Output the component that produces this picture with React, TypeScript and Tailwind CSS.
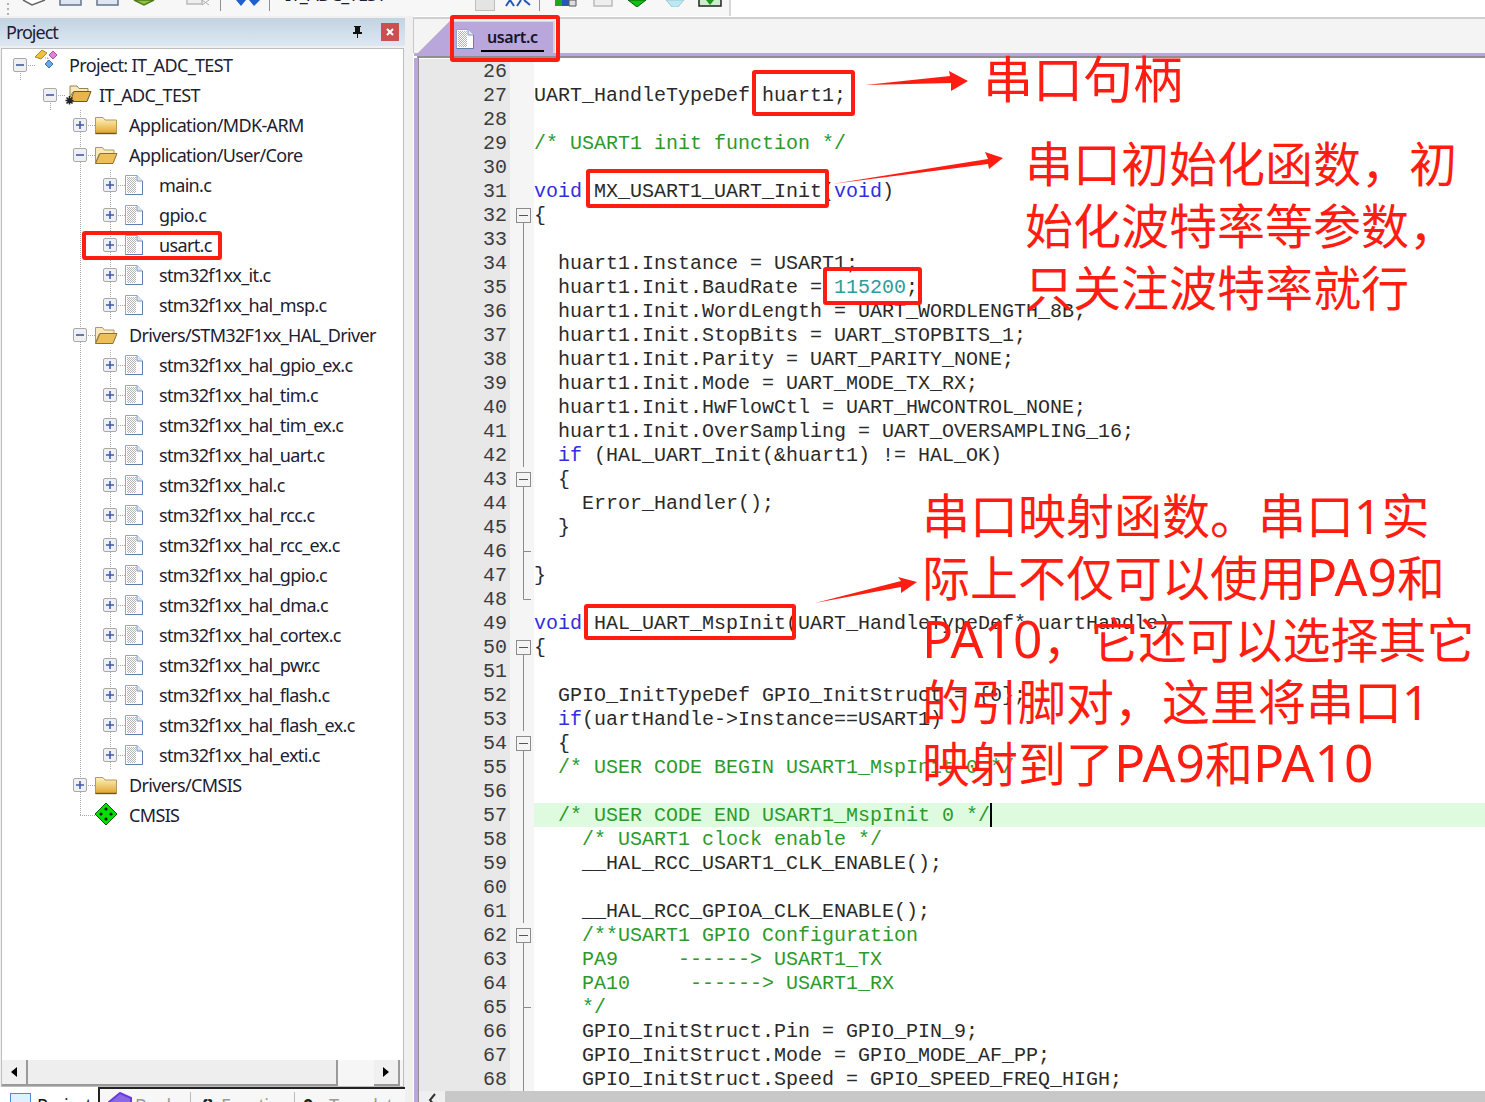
import type { ReactNode } from "react"

const RED = "#ff1d12"
const C = "#2a2a2a"
const K = "#2f2fe0"
const G = "#2c9a2c"
const N = "#2a9d9d"

type Tok = string | [string, string]
type Fold = "box" | "line" | "tick" | "end" | null

// line number, fold marker, tokens
const codeLines: [number, Fold, Tok[]][] = [
  [26, null, []],
  [27, null, ["UART_HandleTypeDef huart1;"]],
  [28, null, []],
  [29, null, [["/* USART1 init function */", G]]],
  [30, null, []],
  [31, null, [["void", K], " MX_USART1_UART_Init(", ["void", K], ")"]],
  [32, "box", ["{"]],
  [33, "line", []],
  [34, "line", ["  huart1.Instance = USART1;"]],
  [35, "line", ["  huart1.Init.BaudRate = ", ["115200", N], ";"]],
  [36, "line", ["  huart1.Init.WordLength = UART_WORDLENGTH_8B;"]],
  [37, "line", ["  huart1.Init.StopBits = UART_STOPBITS_1;"]],
  [38, "line", ["  huart1.Init.Parity = UART_PARITY_NONE;"]],
  [39, "line", ["  huart1.Init.Mode = UART_MODE_TX_RX;"]],
  [40, "line", ["  huart1.Init.HwFlowCtl = UART_HWCONTROL_NONE;"]],
  [41, "line", ["  huart1.Init.OverSampling = UART_OVERSAMPLING_16;"]],
  [42, "line", ["  ", ["if", K], " (HAL_UART_Init(&huart1) != HAL_OK)"]],
  [43, "box", ["  {"]],
  [44, "line", ["    Error_Handler();"]],
  [45, "line", ["  }"]],
  [46, "tick", []],
  [47, "line", ["}"]],
  [48, "end", []],
  [49, null, [["void", K], " HAL_UART_MspInit(UART_HandleTypeDef* uartHandle)"]],
  [50, "box", ["{"]],
  [51, "line", []],
  [52, "line", ["  GPIO_InitTypeDef GPIO_InitStruct = {0};"]],
  [53, "line", ["  ", ["if", K], "(uartHandle->Instance==USART1)"]],
  [54, "box", ["  {"]],
  [55, "line", [["  /* USER CODE BEGIN USART1_MspInit 0 */", G]]],
  [56, "line", []],
  [57, "line", [["  /* USER CODE END USART1_MspInit 0 */", G]]],
  [58, "line", [["    /* USART1 clock enable */", G]]],
  [59, "line", ["    __HAL_RCC_USART1_CLK_ENABLE();"]],
  [60, "line", []],
  [61, "line", ["    __HAL_RCC_GPIOA_CLK_ENABLE();"]],
  [62, "box", [["    /**USART1 GPIO Configuration", G]]],
  [63, "line", [["    PA9     ------> USART1_TX", G]]],
  [64, "line", [["    PA10     ------> USART1_RX", G]]],
  [65, "tick", [["    */", G]]],
  [66, "line", ["    GPIO_InitStruct.Pin = GPIO_PIN_9;"]],
  [67, "line", ["    GPIO_InitStruct.Mode = GPIO_MODE_AF_PP;"]],
  [68, "line", ["    GPIO_InitStruct.Speed = GPIO_SPEED_FREQ_HIGH;"]],
]

type Row = { level: number; text: string; icon: "project" | "target" | "closed" | "open" | "file" | "cmsis"; box?: "plus" | "minus"; guides: number[]; last?: boolean }

const files = (names: string[]): Row[] =>
  names.map((text) => ({ level: 3, text, icon: "file", box: "plus", guides: [2] }))

const treeRows: Row[] = [
  { level: 0, text: "Project: IT_ADC_TEST", icon: "project", box: "minus", guides: [] },
  { level: 1, text: "IT_ADC_TEST", icon: "target", box: "minus", guides: [] },
  { level: 2, text: "Application/MDK-ARM", icon: "closed", box: "plus", guides: [] },
  { level: 2, text: "Application/User/Core", icon: "open", box: "minus", guides: [] },
  ...files(["main.c", "gpio.c", "usart.c", "stm32f1xx_it.c", "stm32f1xx_hal_msp.c"]),
  { level: 2, text: "Drivers/STM32F1xx_HAL_Driver", icon: "open", box: "minus", guides: [] },
  ...files([
    "stm32f1xx_hal_gpio_ex.c",
    "stm32f1xx_hal_tim.c",
    "stm32f1xx_hal_tim_ex.c",
    "stm32f1xx_hal_uart.c",
    "stm32f1xx_hal.c",
    "stm32f1xx_hal_rcc.c",
    "stm32f1xx_hal_rcc_ex.c",
    "stm32f1xx_hal_gpio.c",
    "stm32f1xx_hal_dma.c",
    "stm32f1xx_hal_cortex.c",
    "stm32f1xx_hal_pwr.c",
    "stm32f1xx_hal_flash.c",
    "stm32f1xx_hal_flash_ex.c",
    "stm32f1xx_hal_exti.c",
  ]),
  { level: 2, text: "Drivers/CMSIS", icon: "closed", box: "plus", guides: [] },
  { level: 2, text: "CMSIS", icon: "cmsis", guides: [], last: true },
]

function Connector({ box, last, first }: { box?: "plus" | "minus"; last?: boolean; first?: boolean }) {
  return (
    <svg width="30" height="30" className="shrink-0">
      <path d={first ? "M15.5 15V30" : last ? "M15.5 0V15" : "M15.5 0V30"} stroke="#a8a8a8" strokeDasharray="1 1" fill="none" />
      <path d="M15 15.5H30" stroke="#a8a8a8" strokeDasharray="1 1" fill="none" />
      {box && (
        <>
          <rect x="8.5" y="8.5" width="13" height="13" rx="1.5" fill="#eef0f4" stroke="#a9a9a9" />
          <path d={box === "plus" ? "M11 15H19M15 11V19" : "M11 15H19"} stroke="#3f5aa8" strokeWidth="1.6" fill="none" />
        </>
      )}
    </svg>
  )
}

function Guide({ on }: { on: boolean }) {
  return (
    <svg width="30" height="30" className="shrink-0">
      {on && <path d="M15.5 0V30" stroke="#a8a8a8" strokeDasharray="1 1" fill="none" />}
    </svg>
  )
}

function FileIcon() {
  return (
    <svg width="20" height="22" viewBox="0 0 20 22">
      <defs>
        <pattern id="dith" width="2" height="2" patternUnits="userSpaceOnUse">
          <rect width="1" height="1" fill="#b4b4b4" />
          <rect x="1" y="1" width="1" height="1" fill="#b4b4b4" />
        </pattern>
      </defs>
      <path d="M1.5 1.5H13L18.5 7V20.5H1.5Z" fill="#fff" stroke="#8ea6c8" />
      <rect x="3" y="3" width="9" height="16" fill="url(#dith)" />
      <path d="M13 1.5V7H18.5" fill="#dfe8f4" stroke="#7f98bf" />
      <path d="M18.5 7V20.5H1.5" fill="none" stroke="#5f7fae" />
    </svg>
  )
}

function TreeIcon({ icon }: { icon: Row["icon"] }) {
  if (icon === "file") return <div className="ml-[-2px]"><FileIcon /></div>
  if (icon === "closed")
    return (
      <svg width="24" height="20" viewBox="0 0 24 20" className="ml-[-2px]">
        <defs>
          <linearGradient id="fld" x1="0" y1="0" x2="0" y2="1">
            <stop offset="0" stopColor="#fff3bf" />
            <stop offset="1" stopColor="#e0a52c" />
          </linearGradient>
        </defs>
        <path d="M1.5 18.5V2.5H9L11 5H22.5V18.5Z" fill="url(#fld)" stroke="#b39a5a" />
        <path d="M1.5 18.5H22.5" stroke="#6b5a24" strokeWidth="1.4" />
      </svg>
    )
  if (icon === "open")
    return (
      <svg width="24" height="20" viewBox="0 0 24 20" className="ml-[-2px]">
        <path d="M1.5 18V2.5H8.5L10.5 5H20V9H5Z" fill="#f7e9bd" stroke="#b39a5a" />
        <path d="M1.5 18.5L6 8.5H23L19 18.5Z" fill="#eebe58" stroke="#8a7232" />
      </svg>
    )
  if (icon === "target")
    return (
      <svg width="28" height="24" viewBox="0 0 28 24" className="ml-[-2px]">
        <path d="M6 14V3H13L15 5.5H24V9H9Z" fill="#f7e9bd" stroke="#9a844a" />
        <path d="M6 18.5L10 8.5H27L23 18.5Z" fill="#e8b54c" stroke="#6d5a22" />
        <path d="M5.5 13V21.5M1.5 17.5H9.5M2.5 14.5L8.5 20.5M8.5 14.5L2.5 20.5" stroke="#222" strokeWidth="1.6" />
      </svg>
    )
  if (icon === "cmsis")
    return (
      <svg width="24" height="24" viewBox="0 0 24 24" className="ml-[-2px] mt-[-3px]">
        <path d="M12 1L23 12L12 23L1 12Z" fill="#00e000" stroke="#0a5a0a" />
        <circle cx="12" cy="7" r="1.6" fill="#111" />
        <circle cx="7" cy="12" r="1.6" fill="#111" />
        <circle cx="17" cy="12" r="1.6" fill="#111" />
        <circle cx="12" cy="17" r="1.6" fill="#111" />
      </svg>
    )
  return (
    <svg width="26" height="24" viewBox="0 0 26 24" className="mt-[-8px] ml-[-2px]">
      <path d="M1 8L8 1L13 4L7 10Z" fill="#ecc23f" stroke="#a98a22" />
      <path d="M11 9H14M14 9V14" stroke="#999" strokeDasharray="1 1" fill="none" />
      <path d="M15 6L19 2L23 6L19 10Z" fill="#e77fd8" stroke="#a94f9c" />
      <path d="M11 15L15 11L19 15L15 19Z" fill="#6aa8e8" stroke="#3f72b0" />
    </svg>
  )
}

function TreeRow({ row }: { row: Row }) {
  const cells: ReactNode[] = []
  for (let i = 0; i < row.level; i++) {
    // vertical dotted guide of the parent folders
    cells.push(<Guide key={i} on={row.level === 3 && i === 2} />)
  }
  return (
    <div className="flex items-center h-[30px]">
      {cells}
      <Connector box={row.box} last={row.last} first={row.level < 2} />
      <div className="w-[34px] shrink-0 flex items-center pl-[1px]">
        <TreeIcon icon={row.icon} />
      </div>
      <span className="text-[18px] leading-[30px] text-[#1d2030] whitespace-pre tracking-[-0.65px] font-['Noto_Sans',sans-serif]">{row.text}</span>
    </div>
  )
}

function FoldMark({ fold }: { fold: Fold }) {
  return (
    <svg width="24" height="24" className="shrink-0 ml-[1px]">
      {fold === "box" && (
        <>
          <path d="M12.5 20V24" stroke="#8c8c8c" />
          <rect x="5.5" y="5.5" width="14" height="14" fill="#f4f4f4" stroke="#8c8c8c" />
          <path d="M8 12.5H17" stroke="#555" />
        </>
      )}
      {fold === "line" && <path d="M12.5 0V24" stroke="#8c8c8c" />}
      {fold === "tick" && <path d="M12.5 0V24M12.5 12.5H20" stroke="#8c8c8c" fill="none" />}
      {fold === "end" && <path d="M12.5 0V12.5H20" stroke="#8c8c8c" fill="none" />}
    </svg>
  )
}

function CodeRow({ n, fold, toks }: { n: number; fold: Fold; toks: Tok[] }) {
  return (
    <div className="flex h-6 leading-[26px]">
      <div className="w-[91px] shrink-0 bg-[#e8e8e8] text-right pr-[3px] text-[#3c3c3c]">{n}</div>
      <div className="w-[24px] shrink-0 bg-[#f5f5f5] overflow-hidden">
        <FoldMark fold={fold} />
      </div>
      <div className={n === 57 ? "flex-1 bg-[#dffbdf] whitespace-pre relative" : "flex-1 whitespace-pre"}>
        {toks.map((t, i) =>
          typeof t === "string" ? (
            <span key={i} style={{ color: C }}>{t}</span>
          ) : (
            <span key={i} style={{ color: t[1] }}>{t[0]}</span>
          ),
        )}
        {n === 57 && <span className="inline-block w-[2px] h-[24px] bg-black align-top" />}
      </div>
    </div>
  )
}

function Toolbar() {
  return (
    <div className="h-[16px] shrink-0 flex overflow-hidden bg-white">
      <div className="w-[731px] h-[16px] bg-[#f7f7f7] border-r-2 border-[#d8d8d8] flex items-start pl-[6px] relative">
        <svg width="8" height="14" className="mt-[2px]"><path d="M1 1h2v2H1zM1 6h2v2H1zM1 11h2v2H1z" fill="#b0b0b0" /></svg>
        <svg width="24" height="6" className="ml-[8px]"><path d="M1 0L10 5L23 0" fill="#fff" stroke="#666" strokeWidth="1.5" /></svg>
        <svg width="23" height="6" className="ml-[13px]"><path d="M1 0V5H22V0" fill="#dde6f2" stroke="#64758c" strokeWidth="1.5" /></svg>
        <svg width="23" height="6" className="ml-[14px]"><path d="M1 0V5H22V0" fill="#dde6f2" stroke="#64758c" strokeWidth="1.5" /></svg>
        <svg width="22" height="6" className="ml-[14px]"><path d="M1 0L11 5L21 0Z" fill="#8cc63f" stroke="#4f7a1e" strokeWidth="1.5" /></svg>
        <svg width="24" height="6" className="ml-[31px]"><path d="M1 0V4H16V0" fill="#eee" stroke="#bbb" strokeWidth="1.5" /><path d="M16 0L23 5M23 0L16 5" stroke="#aaa" /></svg>
        <div className="w-px h-[11px] bg-[#909090] ml-[10px]" />
        <svg width="24" height="6" className="ml-[15px]"><path d="M0 0H10L5 6ZM13 0H24L18 6Z" fill="#1f5fd0" /></svg>
        <div className="w-px h-[11px] bg-[#909090] ml-[9px]" />
        <span className="ml-[15px] mt-[-19px] text-[18px] leading-[26px] text-[#1d2030] tracking-[-0.65px] font-['Noto_Sans',sans-serif]">IT_ADC_TEST</span>
        <div className="absolute left-[475px] top-0 w-[20px] h-[11px] bg-[#e4e4e4] border-x border-b border-[#bdbdbd]" />
        <svg width="26" height="7" className="absolute left-[505px] top-0"><path d="M1 6L5 0L9 6M12 6L16 0M19 0L25 5" stroke="#2457b8" strokeWidth="2" fill="none" /></svg>
        <div className="absolute left-[539px] top-0 w-px h-[11px] bg-[#909090]" />
        <svg width="22" height="7" className="absolute left-[555px] top-0"><path d="M0 0H7V6H0Z" fill="#1fa51f" /><path d="M7 0H14V6H7Z" fill="#2457b8" /><path d="M14 0H21V6H14Z" fill="#ddd" stroke="#555" /></svg>
        <svg width="20" height="7" className="absolute left-[593px] top-0"><path d="M1 0V6H19V0" fill="#eee" stroke="#bbb" strokeWidth="1.5" /></svg>
        <svg width="20" height="7" className="absolute left-[627px] top-0"><path d="M1 0L10 7L19 0Z" fill="#10c010" stroke="#0a5a0a" /></svg>
        <svg width="20" height="7" className="absolute left-[665px] top-0"><path d="M1 0H19L13 7H7Z" fill="#bfe6f5" stroke="#9cc" /></svg>
        <svg width="24" height="7" className="absolute left-[698px] top-0"><path d="M1 0V6H23V0" fill="#cdeecd" stroke="#222" strokeWidth="1.5" /><path d="M8 0L12 5L16 0Z" fill="#1a9a1a" /></svg>
      </div>
    </div>
  )
}

function Sidebar() {
  return (
    <div className="w-[405px] shrink-0 flex flex-col bg-[#f0f0f0]">
      <div className="h-[28px] shrink-0 mt-[2px] flex items-center pl-[6px] pr-[6px] bg-gradient-to-b from-[#c3d3e2] to-[#dde8f3]">
        <span className="text-[18px] text-[#1d2030] tracking-[-1px] font-['Noto_Sans',sans-serif]">Project</span>
        <svg width="14" height="14" viewBox="0 0 14 14" className="ml-auto mr-[17px]">
          <path d="M4 1H11V2H10V7H12V9H8V13H7V9H3V7H5V2H4Z" fill="#111" />
        </svg>
        <div className="w-[18px] h-[18px] bg-[#c9504f] flex items-center justify-center">
          <svg width="10" height="10"><path d="M2 2L8 8M8 2L2 8" stroke="#fff" strokeWidth="2" /></svg>
        </div>
      </div>
      <div className="h-[2px] shrink-0" />
      <div className="flex-1 min-h-0 flex flex-col ml-px mr-px border border-[#bdbdbd] bg-white">
        <div className="flex-1 min-h-0 overflow-hidden pt-[1px] pl-[3px]">
          {treeRows.map((r) => (
            <TreeRow key={r.text} row={r} />
          ))}
        </div>
        <div className="h-[26px] shrink-0 flex bg-[#f6f6f6]">
          <div className="w-[26px] shrink-0 bg-[#f0f0f0] border-r-2 border-b-2 border-[#9a9a9a] flex items-center justify-center">
            <svg width="8" height="12"><path d="M7 1V11L1 6Z" fill="#000" /></svg>
          </div>
          <div className="w-[310px] shrink-0 bg-[#eeeeee] border-r-2 border-b-2 border-[#9a9a9a]" />
          <div className="flex-1" />
          <div className="w-[26px] shrink-0 bg-[#f0f0f0] border-r-2 border-b-2 border-[#9a9a9a] flex items-center justify-center mr-[3px]">
            <svg width="8" height="12"><path d="M1 1V11L7 6Z" fill="#000" /></svg>
          </div>
        </div>
      </div>
      <div className="h-[15px] shrink-0 flex text-[18px] leading-[26px] font-['Noto_Sans',sans-serif] tracking-[-0.65px] overflow-hidden bg-[#f7f7f7]">
        <div className="w-[100px] shrink-0 bg-white pl-[10px] flex border-r-2 border-[#222] pt-[6px]">
          <div className="w-[21px] h-[20px] bg-[#dff0ff] border border-[#4a8be0] shrink-0" />
          <span className="ml-[6px] mt-[-1px] text-[#111]">Project</span>
        </div>
        <div className="flex-1 flex border-t-2 border-[#222] pt-[3px]">
          <div className="w-[91px] shrink-0 pl-[8px] flex border-r border-[#bbb]">
            <svg width="24" height="12" className="shrink-0"><path d="M1 10L12 1L23 6V12H1Z" fill="#8a6ae0" stroke="#6a3ae0" strokeWidth="2" /></svg>
            <span className="ml-[3px] text-[#9a9a9a]">Books</span>
          </div>
          <div className="w-[104px] shrink-0 pl-[10px] flex border-r border-[#bbb]">
            <span className="text-[#222] font-bold">{"{}"}</span>
            <span className="ml-[7px] text-[#9a9a9a]">Functions</span>
          </div>
          <div className="flex-1 pl-[8px] flex">
            <span className="text-[#222] font-bold">0.</span>
            <span className="ml-[12px] text-[#9a9a9a]">Templates</span>
          </div>
        </div>
      </div>
    </div>
  )
}

function Editor() {
  return (
    <div className="flex-1 min-w-0 flex flex-col">
      {/* tab strip */}
      <div className="h-[36px] shrink-0 flex bg-[#f4f4f4] border-t-2 border-[#d0d0d0] border-l border-l-[#c8c8c8] pl-[4px] mt-[1px]">
        <svg width="32" height="34" className="shrink-0">
          <path d="M0 34L32 2V34Z" fill="#b9a7dc" />
          <path d="M0 34L32 2" stroke="#c9c9c9" />
        </svg>
        <div className="w-[105px] shrink-0 bg-[#b9a7dc] mt-[2px] flex pl-[5px] pt-[4px] border-r-2 border-t border-[#d6d6d6]">
          <div className="mt-[2px]"><FileIcon /></div>
          <span className="ml-[6px] h-[26px] text-[16px] leading-[22px] font-semibold text-[#141428] tracking-[-0.4px] px-[6px] font-['Noto_Sans',sans-serif] border-b-2 border-black">usart.c</span>
        </div>
      </div>
      <div className="h-[3px] shrink-0 bg-[#b9a7dc] ml-[1px]" />
      <div className="h-[2px] shrink-0 bg-[#8f8f8f] ml-[4px]" />
      <div className="flex-1 min-h-0 flex border-l-4 border-[#b9a7dc] ml-[1px]">
        <div className="flex-1 min-w-0 flex flex-col border-l border-[#8f8f8f] overflow-hidden font-['Liberation_Mono',monospace] text-[20px]">
          <div className="flex-1 min-h-0 overflow-hidden bg-white pt-[1px]">
            {codeLines.map(([n, fold, toks]) => (
              <CodeRow key={n} n={n} fold={fold} toks={toks} />
            ))}
          </div>
          <div className="h-[11px] shrink-0 flex bg-[#c8c8c8]">
            <div className="w-[26px] bg-[#efefef] flex justify-center">
              <svg width="10" height="11"><path d="M8 3L3 9L8 15" stroke="#333" strokeWidth="2" fill="none" /></svg>
            </div>
          </div>
        </div>
      </div>
    </div>
  )
}

function RedBox({ className }: { className: string }) {
  return <div className={"absolute border-4 rounded-[3px] border-[#ff1d12] pointer-events-none " + className} />
}

// the pin names run a little larger than the Chinese text around them
function Pin({ children }: { children: ReactNode }) {
  return <span className="text-[51.5px] leading-none">{children}</span>
}

function Notes() {
  const cjk = "font-['Noto_Sans','Noto_Sans_CJK_SC',sans-serif] leading-[62px] whitespace-pre"
  return (
    <>
      <RedBox className="left-[450px] top-[15px] w-[110px] h-[47px]" />
      <RedBox className="left-[752px] top-[70px] w-[103px] h-[46px]" />
      <RedBox className="left-[586px] top-[169px] w-[243px] h-[39px]" />
      <RedBox className="left-[823px] top-[267px] w-[99px] h-[38px]" />
      <RedBox className="left-[82px] top-[231px] w-[140px] h-[29px]" />
      <RedBox className="left-[584px] top-[604px] w-[212px] h-[36px]" />

      <svg width="1485" height="1102" className="absolute left-0 top-0 pointer-events-none">
        <path d="M865 85L950 76L949 71L968 81L951 91L951 83Z" fill={RED} />
        <path d="M832 184L988 159L985 152L1003 158L989 169L988 164Z" fill={RED} />
        <path d="M815 603L901 581L898 577L917 582L901 593L901 587Z" fill={RED} />
      </svg>

      <div className={"absolute left-[983px] top-[48px] text-[50px] " + cjk} style={{ color: RED }}>串口句柄</div>
      <div className={"absolute left-[1025px] top-[133px] text-[48px] " + cjk} style={{ color: RED }}>
        <div>串口初始化函数，初</div>
        <div>始化波特率等参数，</div>
        <div>只关注波特率就行</div>
      </div>
      <div className={"absolute left-[922px] top-[485px] text-[48px] " + cjk} style={{ color: RED }}>
        <div className="h-[62px]">串口映射函数。串口1实</div>
        <div className="h-[62px]">际上不仅可以使用<Pin>PA9</Pin>和</div>
        <div className="h-[62px]"><Pin>PA10</Pin>，它还可以选择其它</div>
        <div className="h-[62px]">的引脚对，这里将串口1</div>
        <div className="h-[62px]">映射到了<Pin>PA9</Pin>和<Pin>PA10</Pin></div>
      </div>
    </>
  )
}

export default function App() {
  return (
    <div className="relative w-[1485px] h-[1102px] overflow-hidden bg-white flex flex-col">
      <Toolbar />
      <div className="flex-1 min-h-0 flex">
        <Sidebar />
        <div className="w-[8px] shrink-0 bg-[#f0f0f0]" />
        <Editor />
      </div>
      <Notes />
    </div>
  )
}
